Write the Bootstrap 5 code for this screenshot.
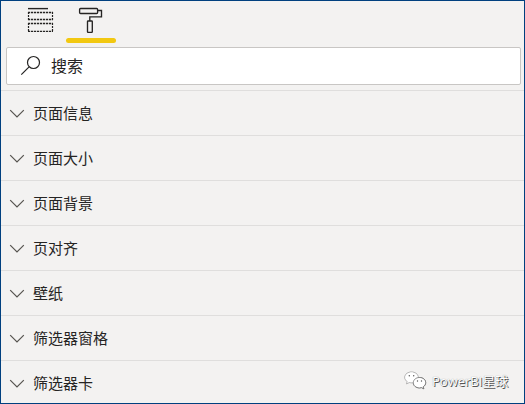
<!DOCTYPE html>
<html lang="zh-CN">
<head>
<meta charset="utf-8">
<meta name="viewport" content="width=device-width, initial-scale=1">
<title>搜索</title>
<link href="https://cdn.jsdelivr.net/npm/bootstrap@5.3.0/dist/css/bootstrap.min.css" rel="stylesheet">
<style>
body{font-family:"Noto Sans CJK SC",sans-serif;color:#252423}
.pane{width:525px;height:404px;background:#f3f2f1;border:1px solid #00407f}
.tabs-bar{height:46px;flex:none;padding-left:15px}
.tab-bar{height:5px;width:50px;border-radius:2.5px;background:#f2c811}
.search-box{height:38px;flex:none;margin:0 3px 5px 5px;background:#fff;border:1px solid #c8c6c4;border-radius:2px;font-size:16px;line-height:34px}
.search-box svg{margin-left:12px;margin-right:8px}
.search-box span{padding-bottom:2px}
.sect{height:45px;flex:none;border-top:1px solid #dfdedd;font-size:15px;line-height:44px;padding-left:8px}
.sect svg{margin-right:8px;margin-top:2px;flex:none;fill:none;stroke:#55534f;stroke-width:1.2}
.brand-tag{position:absolute;left:403px;top:369px;height:22px;line-height:22px;font-family:"Open Sans","Noto Sans CJK SC",sans-serif;font-size:13px;color:#fff;text-shadow:1px 1px 0 #555,0 0 1px #888}
.brand-tag svg{margin-right:5px;filter:drop-shadow(.5px .5px 0 #666)}
</style>
</head>
<body>
<main class="pane position-relative d-flex flex-column overflow-hidden">
  <div class="tabs-bar d-flex">
    <div class="d-flex flex-column">
      <svg width="50" height="37" viewBox="16 1 50 37" fill="none" stroke="#252423"><path d="M28 8.6h20" stroke-width="1.4"/><path d="M28 12.5h25M28 19.500h25M28 23.500h25M28 31.300h25" stroke-width="1.3" stroke-dasharray="2.2 .8"/><path d="M28.500 12v8M52.500 12v8M28.500 23v9M52.500 23v9" stroke-width="1.200" stroke-dasharray="2 1"/></svg>
    </div>
    <div class="d-flex flex-column">
      <svg width="50" height="37" viewBox="66 1 50 37" fill="none" stroke="#252423" stroke-width="1.35"><rect x="79.6" y="8.5" width="18" height="5" rx="1"/><path d="M97.6 10.5h3.9v6.300H89.800v4.200"/><rect x="87.500" y="21" width="4.800" height="11.400" rx=".6"/></svg>
      <div class="tab-bar"></div>
    </div>
  </div>
  <div class="search-box d-flex align-items-center">
    <svg width="24" height="24" viewBox="19 54 24 24" fill="none" stroke="#252423" stroke-width="1.2"><circle cx="33.5" cy="62.5" r="6"/><path d="M29.1 66.9 21.3 74.6"/></svg>
    <span>搜索</span>
  </div>
  <div class="sect d-flex align-items-center"><svg width="16" height="10"><path d="m1.2 1.2 6.8 6.8 6.8-6.8"/></svg><span>页面信息</span></div>
  <div class="sect d-flex align-items-center"><svg width="16" height="10"><path d="m1.2 1.2 6.8 6.8 6.8-6.8"/></svg><span>页面大小</span></div>
  <div class="sect d-flex align-items-center"><svg width="16" height="10"><path d="m1.2 1.2 6.8 6.8 6.8-6.8"/></svg><span>页面背景</span></div>
  <div class="sect d-flex align-items-center"><svg width="16" height="10"><path d="m1.2 1.2 6.8 6.8 6.8-6.8"/></svg><span>页对齐</span></div>
  <div class="sect d-flex align-items-center"><svg width="16" height="10"><path d="m1.2 1.2 6.8 6.8 6.8-6.8"/></svg><span>壁纸</span></div>
  <div class="sect d-flex align-items-center"><svg width="16" height="10"><path d="m1.2 1.2 6.8 6.8 6.8-6.8"/></svg><span>筛选器窗格</span></div>
  <div class="sect d-flex align-items-center"><svg width="16" height="10"><path d="m1.2 1.2 6.8 6.8 6.8-6.8"/></svg><span>筛选器卡</span></div>
  <div class="brand-tag d-flex align-items-center text-nowrap">
    <svg width="23" height="20" viewBox="0 0 23 20" fill="#fff" stroke="#aaa" stroke-width=".4"><path d="M7.500 1C3.800 1 .8 3.400.8 6.400c0 1.700 1 3.200 2.500 4.200l-.7 2.200 2.600-1.300c.7.200 1.500.3 2.300.3 3.700 0 6.700-2.400 6.700-5.400S11.200 1 7.500 1z"/><path stroke="#666" stroke-width=".7" d="M15.500 6.500c-3.500 0-6.200 2.300-6.200 5.200s2.700 5.200 6.200 5.200c.7 0 1.400-.1 2-.3l2.300 1.200-.6-2c1.500-.9 2.500-2.400 2.500-4.100 0-2.900-2.700-5.200-6.200-5.200z"/><g fill="#555" stroke="none"><circle cx="5.300" cy="4.800" r=".7"/><circle cx="9.700" cy="4.800" r=".7"/><circle cx="13.500" cy="10" r=".7"/><circle cx="17.500" cy="10" r=".7"/></g></svg>
    <span>PowerBI星球</span>
  </div>
</main>
<script src="https://cdn.jsdelivr.net/npm/bootstrap@5.3.0/dist/js/bootstrap.bundle.min.js"></script>
</body>
</html>
